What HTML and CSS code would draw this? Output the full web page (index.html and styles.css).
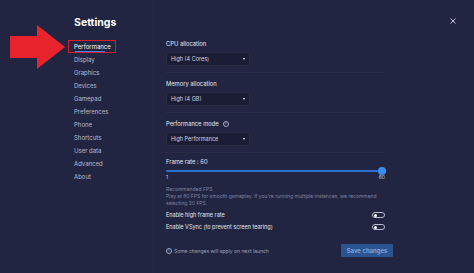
FILE: index.html
```html
<!DOCTYPE html>
<html>
<head>
<meta charset="utf-8">
<link rel="stylesheet" href="styles.css">
</head>
<body>
<div class="app">
  <aside class="sidebar">
    <h1 class="title">Settings</h1>
    <nav class="nav">
      <div class="nav-item active">Performance</div>
      <div class="nav-item">Display</div>
      <div class="nav-item">Graphics</div>
      <div class="nav-item">Devices</div>
      <div class="nav-item">Gamepad</div>
      <div class="nav-item">Preferences</div>
      <div class="nav-item">Phone</div>
      <div class="nav-item">Shortcuts</div>
      <div class="nav-item">User data</div>
      <div class="nav-item">Advanced</div>
      <div class="nav-item">About</div>
    </nav>
  </aside>
  <main class="content">
    <section class="field">
      <div class="label">CPU allocation</div>
      <div class="select"><span>High (4 Cores)</span><span class="caret"></span></div>
    </section>
    <section class="field">
      <div class="label">Memory allocation</div>
      <div class="select"><span>High (4 GB)</span><span class="caret"></span></div>
    </section>
    <section class="field">
      <div class="label">Performance mode <span class="qicon">?</span></div>
      <div class="select"><span>High Performance</span><span class="caret"></span></div>
    </section>
    <section class="frame">
      <div class="label">Frame rate : 60</div>
      <div class="slider"><div class="track"></div><div class="thumb"></div></div>
      <div class="scale"><span>1</span><span>60</span></div>
      <div class="hint-title">Recommended FPS</div>
      <div class="hint">Play at 60 FPS for smooth gameplay. If you're running multiple instances, we recommend selecting 20 FPS.</div>
      <div class="toggle-row"><span>Enable high frame rate</span><span class="toggle"><span class="knob"></span></span></div>
      <div class="toggle-row"><span>Enable VSync (to prevent screen tearing)</span><span class="toggle"><span class="knob"></span></span></div>
    </section>
    <div class="footer">
      <div class="note"><span class="iicon">i</span>Some changes will apply on next launch</div>
      <button class="save">Save changes</button>
    </div>
  </main>
  <svg class="close" width="6" height="6" viewBox="0 0 6 6"><path d="M0.5 0.5 L5.5 5.5 M5.5 0.5 L0.5 5.5" stroke="#c3c6d8" stroke-width="1" fill="none"/></svg>
  <svg class="arrow" width="70" height="75" viewBox="0 0 70 75"><polygon points="10,36 37,36 37,25 65,47 37,69 37,58 10,58" fill="#e8232b"/></svg>
</div>
</body>
</html>
```
FILE: styles.css
```css
html, body {
  margin: 0;
  padding: 0;
  background: #222541;
}
body {
  font-family: Inter, "Noto Sans", sans-serif;
  color: #e3e5ee;
}
.app {
  position: relative;
  display: flex;
  width: 474px;
  height: 273px;
  overflow: hidden;
  background: #222541;
}
.sidebar {
  width: 79px;
  padding: 16px 0 0 74px;
  border-right: 1px solid rgba(255, 255, 255, 0.02);
}
.title {
  margin: 0 0 10px;
  font-size: 10.5px;
  font-weight: 700;
  line-height: 14px;
  color: #ffffff;
}
.nav-item {
  position: relative;
  height: 13px;
  font-size: 6px;
  line-height: 13px;
  color: #b8bbcf;
  white-space: nowrap;
}
.nav-item.active {
  color: #ffffff;
}
.nav-item.active::before {
  content: "";
  position: absolute;
  left: -6px;
  top: 0;
  width: 48px;
  height: 13px;
  box-sizing: border-box;
  border: 1.5px solid #d91f2a;
}
.nav-item.active::after {
  content: "";
  position: absolute;
  left: 1px;
  top: 11px;
  width: 30px;
  height: 1px;
  background: #3b82f6;
}
.content {
  width: 219px;
  margin-left: 12px;
  padding-top: 33px;
}
.field {
  padding: 6px 0;
  border-bottom: 1px solid rgba(255, 255, 255, 0.035);
}
.label {
  display: flex;
  align-items: center;
  gap: 4px;
  height: 10px;
  margin-bottom: 3px;
  font-size: 5.8px;
  line-height: 10px;
  color: #e6e8f0;
}
.qicon, .iicon {
  display: inline-flex;
  align-items: center;
  justify-content: center;
  width: 6px;
  height: 6px;
  box-sizing: border-box;
  border: 0.7px solid #a6aac2;
  border-radius: 50%;
  font-size: 4px;
  line-height: 1;
  color: #a6aac2;
}
.select {
  display: flex;
  align-items: center;
  justify-content: space-between;
  width: 84px;
  height: 14px;
  box-sizing: border-box;
  padding: 0 4px;
  background: #1b1d37;
  border: 1px solid rgba(255, 255, 255, 0.06);
  border-radius: 2px;
  font-size: 5.5px;
  color: #cfd2e0;
}
.caret {
  width: 0;
  height: 0;
  border-left: 1.6px solid transparent;
  border-right: 1.6px solid transparent;
  border-top: 2px solid #ffffff;
}
.frame {
  padding-top: 4px;
}
.frame .label {
  margin-bottom: 0;
}
.slider {
  position: relative;
  display: flex;
  align-items: center;
  height: 8px;
  margin-right: 3px;
}
.track {
  flex: 1;
  height: 2px;
  border-radius: 1px;
  background: #2f6fd0;
}
.thumb {
  position: absolute;
  right: -4px;
  top: 0;
  width: 8px;
  height: 8px;
  border-radius: 50%;
  background: #3a8ef0;
}
.scale {
  display: flex;
  justify-content: space-between;
  margin-top: -1px;
  font-size: 5px;
  line-height: 7px;
  color: #c8cbd8;
}
.hint-title {
  margin-top: 4px;
  font-size: 5px;
  line-height: 8px;
  color: #7f83a0;
}
.hint {
  font-size: 5px;
  line-height: 7px;
  color: #7f83a0;
}
.toggle-row {
  display: flex;
  align-items: center;
  justify-content: space-between;
  height: 12px;
  font-size: 5.5px;
  color: #e3e5ee;
}
.hint + .toggle-row {
  margin-top: 2px;
}
.toggle {
  display: flex;
  align-items: center;
  width: 13px;
  height: 6px;
  box-sizing: border-box;
  padding-left: 1px;
  border: 1px solid #b9bccc;
  border-radius: 3px;
}
.knob {
  width: 3px;
  height: 3px;
  border-radius: 50%;
  background: #ffffff;
}
.footer {
  display: flex;
  align-items: center;
  justify-content: space-between;
  width: 227px;
  height: 13px;
  margin-top: 11px;
}
.note {
  display: flex;
  align-items: center;
  gap: 2px;
  font-size: 5px;
  color: #9ea2ba;
}
.save {
  width: 52px;
  height: 13px;
  padding: 0;
  border: none;
  border-radius: 1px;
  background: #2b5590;
  color: #86aadc;
  font-family: Inter, "Noto Sans", sans-serif;
  font-size: 6px;
  font-weight: 600;
}
.close {
  position: absolute;
  left: 450px;
  top: 18px;
}
.arrow {
  position: absolute;
  left: 0;
  top: 0;
}
```
